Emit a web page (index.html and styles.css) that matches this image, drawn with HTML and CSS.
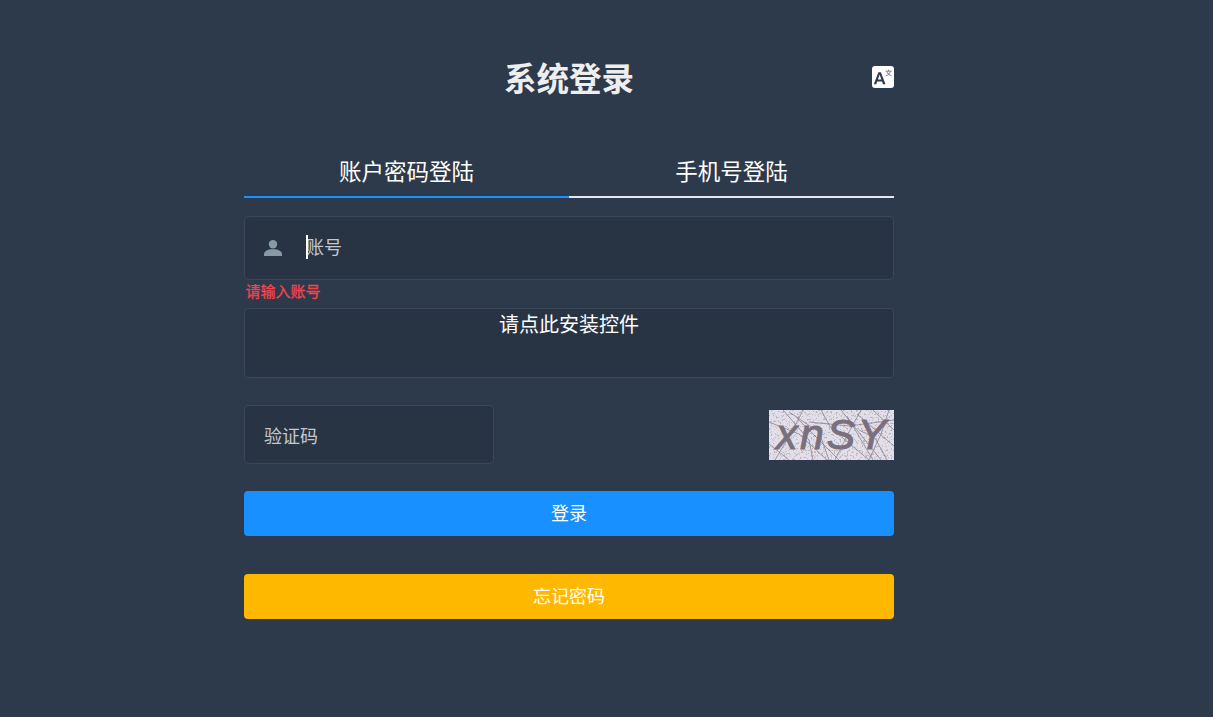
FILE: index.html
```html
<!DOCTYPE html>
<html lang="zh-CN">
<head>
<meta charset="utf-8">
<title>系统登录</title>
<link rel="stylesheet" href="styles.css">
</head>
<body>
<main class="login">
  <header class="title-row">
    <span></span>
    <h1 class="title">系统登录</h1>
    <button class="lang" type="button" aria-label="语言">
      <svg viewBox="0 0 22 22" width="22" height="22">
        <rect width="22" height="22" rx="3" fill="#fff"/>
        <path d="M1.8 18.2 6.4 6.2h2.5l4.6 12h-2.5l-.9-2.7H5.2l-.9 2.7zM5.9 13.5h3.5L7.6 8.6z" fill="#2d3a4b"/>
        <path d="M13.6 5.2h6M16.6 3.6v1.6M14.8 5.6c.8 2.2 2.6 3.6 4.8 4.2M18.4 5.6c-.8 2.2-2.4 3.6-4.6 4.2" fill="none" stroke="#5d6774" stroke-width=".8"/>
      </svg>
    </button>
  </header>

  <nav class="tabs">
    <div class="tab tab-active">账户密码登陆</div>
    <div class="tab">手机号登陆</div>
  </nav>

  <div class="field field-user">
    <svg class="user-icon" viewBox="0 0 18 16" width="18" height="16">
      <circle cx="9" cy="4.2" r="4.2" fill="#889aa4"/>
      <path d="M0 16v-1.6C0 11.2 3.2 9.2 9 9.2s9 2 9 5.2V16z" fill="#889aa4"/>
    </svg>
    <span class="caret"></span>
    <input class="input" type="text" placeholder="账号">
  </div>
  <div class="error">请输入账号</div>

  <div class="field field-plugin">请点此安装控件</div>

  <div class="captcha-row">
    <div class="field field-code">
      <input class="input" type="text" placeholder="验证码">
    </div>
    <svg class="captcha" viewBox="0 0 125 50" width="125" height="50" role="img" aria-label="验证码图片">
      <defs>
        <filter id="speckle" x="0" y="0" width="100%" height="100%">
          <feTurbulence type="fractalNoise" baseFrequency="0.55" numOctaves="2" seed="7"/>
          <feColorMatrix type="matrix" values="0 0 0 0 .5  0 0 0 0 .46  0 0 0 0 .5  0 0 0 9 -5.2"/>
        </filter>
      </defs>
      <rect width="125" height="50" fill="#e2dfea"/>
      <rect width="125" height="50" filter="url(#speckle)"/>
      <g class="captcha-lines">
        <path d="M0 12 30 24 58 50M14 0 40 30 44 50M28 8 70 50M52 0 62 18 100 50M72 0 96 30 112 50M88 4 125 36M104 0 125 20M0 34 20 50M6 50 24 20 34 0M66 50 80 22 92 0M100 50 112 24 120 0M40 12 80 16 125 10M20 2 50 22 60 50M78 6 104 50M118 50 106 28 90 20"/>
      </g>
      <text class="captcha-text" x="7" y="39">xnSY</text>
    </svg>
  </div>

  <button class="btn btn-primary" type="button">登录</button>
  <button class="btn btn-warning" type="button">忘记密码</button>
</main>
</body>
</html>
```
FILE: styles.css
```css
* { box-sizing: border-box; }

html, body { height: 100%; }

body {
  margin: 0;
  background: #2d3a4b;
  font-family: "Liberation Sans", "Noto Sans CJK SC", sans-serif;
  color: #fff;
  overflow: hidden;
}

.login {
  width: 650px;
  margin-left: 244px;
  padding-top: 58px;
  display: flex;
  flex-direction: column;
}

.title-row {
  display: grid;
  grid-template-columns: 1fr auto 1fr;
  align-items: center;
  height: 42px;
}

.title {
  margin: 0;
  font-size: 32.5px;
  line-height: 44px;
  font-weight: 700;
  color: #eee;
}

.lang {
  justify-self: end;
  width: 22px;
  height: 22px;
  margin-top: -6px;
  padding: 0;
  border: 0;
  background: none;
  display: block;
}

.lang svg { display: block; }

.tabs {
  display: flex;
  margin-top: 52px;
}

.tab {
  flex: 1;
  height: 46px;
  line-height: 42px;
  text-align: center;
  font-size: 22.5px;
  color: #fff;
  border-bottom: 2px solid #e4e7ed;
}

.tab-active { border-bottom-color: #1890ff; }

.field {
  background: #283443;
  border: 1px solid rgba(255, 255, 255, 0.1);
  border-radius: 5px;
}

.field-user {
  height: 64px;
  margin-top: 18px;
  padding-left: 19px;
  display: flex;
  align-items: center;
  position: relative;
}

.user-icon { flex: none; margin-right: 13px; }

.caret {
  position: absolute;
  left: 61px;
  top: 18px;
  width: 2px;
  height: 24px;
  background: #fff;
}

.input {
  flex: 1;
  min-width: 0;
  height: 100%;
  padding: 0 0 0 11px;
  border: 0;
  outline: 0;
  background: transparent;
  color: #fff;
  font: inherit;
  font-size: 18px;
}

.input::placeholder { color: #c4c8ce; opacity: 1; }

.error {
  height: 28px;
  padding: 2px 0 0 1.5px;
  font-size: 15px;
  line-height: 20px;
  color: #f4444f;
  -webkit-text-stroke: 0.3px #f4444f;
}

.field-plugin {
  height: 70px;
  text-align: center;
  font-size: 20px;
  line-height: 32px;
  color: #fff;
}

.captcha-row {
  display: flex;
  justify-content: space-between;
  align-items: center;
  height: 59px;
  margin-top: 27px;
}

.field-code {
  width: 250px;
  height: 59px;
  padding: 6px 0 0 8px;
  display: flex;
}

.captcha { display: block; flex: none; }

.captcha-lines path {
  fill: none;
  stroke: #7f7c88;
  stroke-width: 0.9;
  opacity: 0.8;
}

.captcha-text {
  font-family: "Liberation Sans", sans-serif;
  font-style: italic;
  font-size: 43px;
  line-height: 1;
  letter-spacing: 2.5px;
  fill: #7a6f7d;
  stroke: #7a6f7d;
  stroke-width: 0.9;
}

.btn {
  display: block;
  width: 100%;
  height: 45px;
  border: 0;
  border-radius: 4px;
  color: #fff;
  font: inherit;
  font-size: 18px;
  padding: 0 0 3px;
}

.btn-primary { margin-top: 27px; background: #1890ff; }

.btn-warning { margin-top: 38px; background: #ffb800; }
```
